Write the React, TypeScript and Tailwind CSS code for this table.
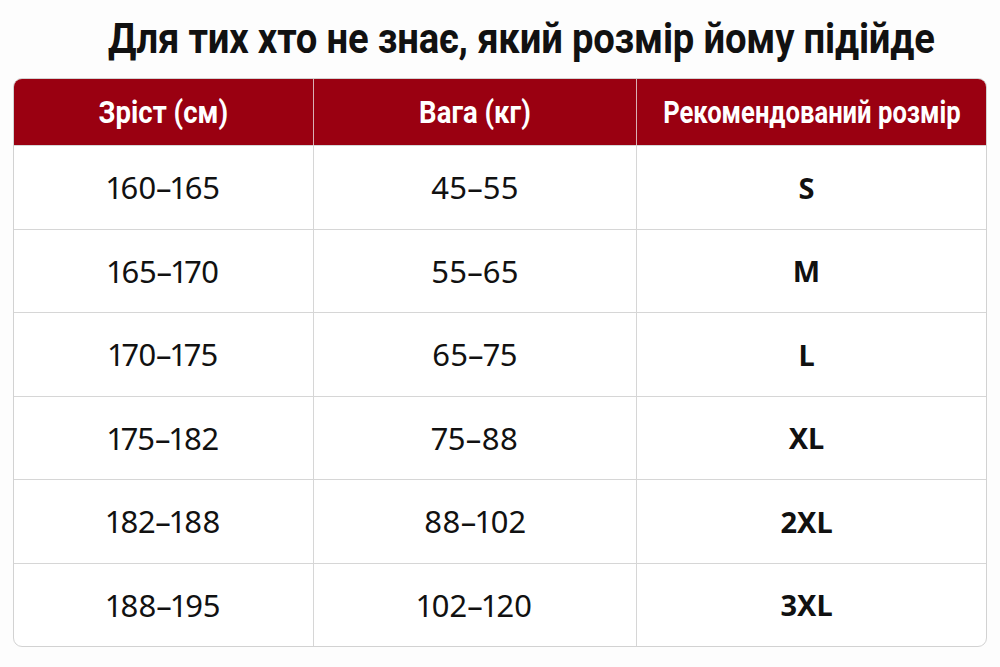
import React from "react";

const rows: [string, string, string][] = [
  ["160–165", "45–55", "S"],
  ["165–170", "55–65", "M"],
  ["170–175", "65–75", "L"],
  ["175–182", "75–88", "XL"],
  ["182–188", "88–102", "2XL"],
  ["188–195", "102–120", "3XL"],
];

export default function App() {
  return (
    <div className="w-[1000px] h-[667px] bg-[#fdfdfd] flex flex-col items-center" style={{ fontFamily: "Roboto, 'Noto Sans', sans-serif" }}>
      <div className="h-[78px] w-full flex items-center justify-center pl-[42px]">
        <h1 className="text-[42px] font-bold text-[#111] whitespace-nowrap scale-x-[0.91] leading-none tracking-[-0.2px]">
          Для тих хто не знає, який розмір йому підійде
        </h1>
      </div>
      <div className="w-[974px] rounded-[9px] border border-[#d2d2d2] overflow-hidden bg-white">
        <div className="grid grid-cols-[300px_323px_minmax(0,1fr)] h-[66px] bg-[#9a0011] text-white">
          <div className="flex items-center justify-center border-r border-[#d9b0b4] min-w-0">
            <span className="text-[32px] font-bold whitespace-nowrap scale-x-[0.86] leading-none">Зріст (см)</span>
          </div>
          <div className="flex items-center justify-center border-r border-[#d9b0b4] min-w-0">
            <span className="text-[32px] font-bold whitespace-nowrap scale-x-[0.86] leading-none">Вага (кг)</span>
          </div>
          <div className="flex items-center justify-center min-w-0">
            <span className="text-[32px] font-bold whitespace-nowrap scale-x-[0.8] leading-none shrink-0">Рекомендований розмір</span>
          </div>
        </div>
        {rows.map((r, ri) => (
          <div key={ri} className="grid grid-cols-[300px_323px_minmax(0,1fr)] h-[83.5px] border-t border-[#d6d6d6]">
            <div className="flex items-center justify-center border-r border-[#d6d6d6]">
              <span className="text-[31px] text-[#111] whitespace-nowrap proportional-nums tracking-[-0.2px]" style={{ fontFamily: "'Noto Sans', sans-serif" }}>{r[0]}</span>
            </div>
            <div className="flex items-center justify-center border-r border-[#d6d6d6]">
              <span className="text-[31px] text-[#111] whitespace-nowrap proportional-nums tracking-[0.2px]" style={{ fontFamily: "'Noto Sans', sans-serif" }}>{r[1]}</span>
            </div>
            <div className="flex items-center justify-center pr-[10px]">
              <span className="text-[29px] font-bold text-[#111] whitespace-nowrap" style={{ fontFamily: "'Noto Sans', sans-serif" }}>{r[2]}</span>
            </div>
          </div>
        ))}
      </div>
    </div>
  );
}
